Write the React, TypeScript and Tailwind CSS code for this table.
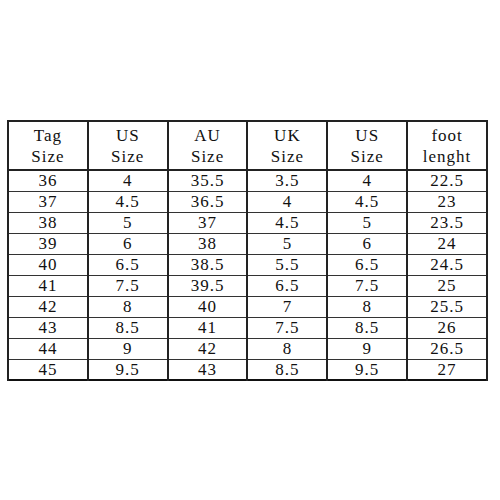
const headers = [
  ["Tag", "Size"],
  ["US", "Size"],
  ["AU", "Size"],
  ["UK", "Size"],
  ["US", "Size"],
  ["foot", "lenght"],
];

const rows = [
  ["36", "4", "35.5", "3.5", "4", "22.5"],
  ["37", "4.5", "36.5", "4", "4.5", "23"],
  ["38", "5", "37", "4.5", "5", "23.5"],
  ["39", "6", "38", "5", "6", "24"],
  ["40", "6.5", "38.5", "5.5", "6.5", "24.5"],
  ["41", "7.5", "39.5", "6.5", "7.5", "25"],
  ["42", "8", "40", "7", "8", "25.5"],
  ["43", "8.5", "41", "7.5", "8.5", "26"],
  ["44", "9", "42", "8", "9", "26.5"],
  ["45", "9.5", "43", "8.5", "9.5", "27"],
];

export default function App() {
  return (
    <div className="w-[500px] h-[500px] bg-white pt-[120px] pl-[7px]">
      <table className="w-[481px] border-collapse border-2 border-[#111] text-[#111] text-[17px] table-fixed font-['Liberation_Serif','Times_New_Roman',serif]">
        <thead>
          <tr className="h-[49px]">
            {headers.map((h, i) => (
              <th
                key={i}
                className="border-2 border-[#222] font-normal text-center leading-[21px] tracking-[1px] p-0"
              >
                <div>{h[0]}</div>
                <div>{h[1]}</div>
              </th>
            ))}
          </tr>
        </thead>
        <tbody>
          {rows.map((r, ri) => (
            <tr key={ri} className="h-[21px]">
              {r.map((c, ci) => (
                <td
                  key={ci}
                  className="border-x-2 border-y border-x-[#222] border-y-[#333] text-center leading-[19px] tracking-[1px] p-0"
                >
                  {c}
                </td>
              ))}
            </tr>
          ))}
        </tbody>
      </table>
    </div>
  );
}
